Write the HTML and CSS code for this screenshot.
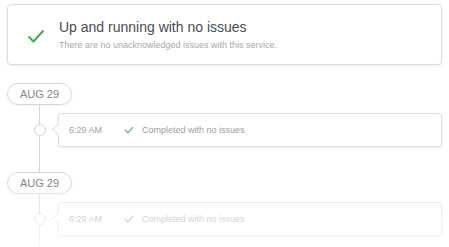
FILE: index.html
```html
<!DOCTYPE html>
<html lang="en">
<head>
    <meta charset="UTF-8">
    <title>Service status</title>
    <link rel="stylesheet" href="styles.css">
</head>
<body>
    <div class="status">
        <svg class="status-icon" width="18" height="14" viewBox="0 0 18 14">
            <path d="M1.5 7.5 L6.5 12.5 L16.5 1.5" fill="none" stroke="#3fae49" stroke-width="2"/>
        </svg>
        <div class="status-text">
            <div class="status-title">Up and running with no issues</div>
            <div class="status-sub">There are no unacknowledged issues with this service.</div>
        </div>
    </div>

    <div class="timeline">
        <div class="day">
            <div class="date">AUG 29</div>
            <div class="events">
                <div class="event">
                    <span class="time">6:29 AM</span>
                    <svg class="check" width="10" height="8" viewBox="0 0 10 8">
                        <path d="M1 4 L3.8 6.8 L9 1.2" fill="none" stroke="#5cb85c" stroke-width="1.2"/>
                    </svg>
                    <span class="msg">Completed with no issues</span>
                </div>
            </div>
        </div>
        <div class="day faded">
            <div class="date">AUG 29</div>
            <div class="events">
                <div class="event">
                    <span class="time">6:29 AM</span>
                    <svg class="check" width="10" height="8" viewBox="0 0 10 8">
                        <path d="M1 4 L3.8 6.8 L9 1.2" fill="none" stroke="#5cb85c" stroke-width="1.2"/>
                    </svg>
                    <span class="msg">Completed with no issues</span>
                </div>
            </div>
        </div>
    </div>
</body>
</html>
```

FILE: styles.css
```css
body {
    margin: 0;
    padding: 4px 7px 0 7px;
    font-family: 'Liberation Sans', Arial, sans-serif;
    background: #fff;
    overflow: hidden;
}
.status {
    display: flex;
    align-items: center;
    height: 59px;
    border: 1px solid #d9dede;
    border-radius: 4px;
    box-shadow: 0 1px 3px rgba(0, 0, 0, 0.08);
}
.status-icon {
    margin: 2px 14px 0 19px;
}
.status-title {
    color: #464c56;
    font-size: 14px;
    margin-bottom: 5px;
}
.status-sub {
    color: #a4a9ae;
    font-size: 9px;
}
.timeline {
    margin-top: 18px;
}
.day {
    position: relative;
}
.date {
    width: 63px;
    height: 20px;
    line-height: 20px;
    border: 1px solid #d3d9d9;
    border-radius: 11px;
    text-align: center;
    font-size: 11px;
    color: #80858c;
    box-shadow: 0 1px 2px rgba(0, 0, 0, 0.05);
}
.events {
    margin-left: 32px;
    border-left: 1px solid #d3d7da;
    padding: 8px 0 25px 18px;
}
.event {
    position: relative;
    display: flex;
    align-items: center;
    height: 32px;
    border: 1px solid #dbe0e0;
    border-radius: 3px;
    box-shadow: 0 1px 3px rgba(0, 0, 0, 0.08);
    font-size: 9px;
    color: #9aa0a6;
    padding-left: 10px;
}
.event::before {
    content: "";
    position: absolute;
    left: -25px;
    top: 10px;
    width: 10px;
    height: 10px;
    border: 1px solid #cfd4d7;
    border-radius: 50%;
    background: #fff;
}
.event::after {
    content: "";
    position: absolute;
    left: -5px;
    top: 11px;
    width: 8px;
    height: 8px;
    background: #fff;
    border-left: 1px solid #dbe0e0;
    border-bottom: 1px solid #dbe0e0;
    transform: rotate(45deg);
}
.time {
    width: 55px;
}
.check {
    margin-right: 8px;
}
.faded::after {
    content: "";
    position: absolute;
    left: -7px;
    right: -7px;
    top: 20px;
    bottom: 0;
    background: linear-gradient(rgba(255, 255, 255, 0.3), rgba(255, 255, 255, 0.9));
}
```
